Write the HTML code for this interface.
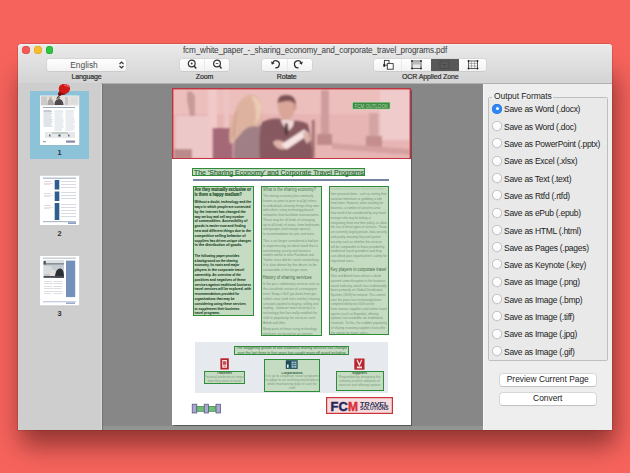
<!DOCTYPE html>
<html><head><meta charset="utf-8">
<style>
*{margin:0;padding:0;box-sizing:border-box}
html,body{width:630px;height:473px;overflow:hidden}
body{background:#F5635C;font-family:"Liberation Sans",sans-serif;position:relative}
div,svg{position:absolute}
#shadow{left:20px;top:74px;width:596px;height:372px;background:rgba(60,12,12,0.52);filter:blur(12px);border-radius:10px}
#win{left:18px;top:44px;width:594px;height:386px;background:#ECECEC;border-radius:4px 4px 0 0;overflow:hidden;box-shadow:0 0 0 0.5px rgba(90,20,20,0.35)}
#tb{left:18px;top:44px;width:594px;height:39px;background:linear-gradient(#EAEAEA,#D4D4D4);border-radius:4px 4px 0 0;box-shadow:inset 0 0.6px 0 #F8F8F8}
.light{width:7.8px;height:7.8px;border-radius:50%;top:46px}
.title{left:18px;width:594px;top:45.7px;text-align:center;font-size:8.2px;letter-spacing:-0.14px;color:#3A3A3A;white-space:nowrap}
.lbl{font-size:7px;font-weight:normal;-webkit-text-stroke:0.22px #333;letter-spacing:-0.12px;color:#333;text-align:center;white-space:nowrap;top:73px}
.seg{top:58.5px;height:12.5px;background:linear-gradient(#FEFEFE,#F3F3F3);border-radius:2.5px;box-shadow:0 0 0 0.5px #CACACA,0 0.6px 0.6px rgba(0,0,0,0.12)}
.radio{width:10px;height:10px;border-radius:50%;background:linear-gradient(#FFF,#F8F8F8);box-shadow:inset 0 0 0 0.8px #B8B8B8,0 0.4px 0.6px rgba(0,0,0,0.1)}
.rtxt{font-size:8.5px;letter-spacing:-0.27px;color:#1C1C1C;white-space:nowrap;left:504px}
.btn{height:11.5px;background:#FFF;border-radius:2.5px;box-shadow:0 0 0 0.5px #C4C4C4,0 0.6px 0.8px rgba(0,0,0,0.2);font-size:8.4px;color:#222;text-align:center;line-height:11.5px}
.gb{border:1px solid #2F8C3B;background:#C6DCC2}
.t{font-size:4.3px;line-height:4.8px;white-space:nowrap;overflow:hidden}
</style></head><body>
<div id="shadow"></div>
<div id="win"></div>
<div id="tb"></div>
<!-- traffic lights -->
<div class="light" style="left:22.3px;background:#F45B56;box-shadow:inset 0 0 0 0.5px #D94640"></div>
<div class="light" style="left:34px;background:#F7BD30;box-shadow:inset 0 0 0 0.5px #DA9E20"></div>
<div class="light" style="left:45.6px;background:#30C442;box-shadow:inset 0 0 0 0.5px #1FA02D"></div>
<div class="title">fcm_white_paper_-_sharing_economy_and_corporate_travel_programs.pdf</div>

<!-- language popup -->
<div class="seg" style="left:47px;width:79px;"></div>
<div style="left:48px;width:72px;top:60px;font-size:8.4px;color:#4E4E4E;text-align:center">English</div>
<svg style="left:118px;top:60px" width="7" height="10" viewBox="0 0 7 10"><path d="M1.5 4 L3.5 2 L5.5 4 M1.5 6 L3.5 8 L5.5 6" fill="none" stroke="#333" stroke-width="1.1"/></svg>
<div class="lbl" style="left:47px;width:79px">Language</div>

<!-- zoom -->
<div class="seg" style="left:179.6px;width:49.8px;"></div>
<div style="left:204px;top:59px;width:0.6px;height:11.5px;background:#EAEAEA"></div>
<svg style="left:184px;top:58.4px" width="40" height="14" viewBox="0 0 40 14">
 <circle cx="7.7" cy="5.5" r="3.4" fill="none" stroke="#333" stroke-width="1.2"/><line x1="10.2" y1="8" x2="12.2" y2="10.5" stroke="#333" stroke-width="1.4"/><circle cx="7.7" cy="5.5" r="0.9" fill="#333"/>
 <circle cx="33" cy="5.5" r="3.4" fill="none" stroke="#333" stroke-width="1.2"/><line x1="35.5" y1="8" x2="37.5" y2="10.5" stroke="#333" stroke-width="1.4"/><line x1="31.8" y1="5.5" x2="34.2" y2="5.5" stroke="#333" stroke-width="0.8"/>
</svg>
<div class="lbl" style="left:179.6px;width:49.8px">Zoom</div>

<!-- rotate -->
<div class="seg" style="left:261.7px;width:50px;"></div>
<div style="left:286.5px;top:59px;width:0.6px;height:11.5px;background:#EAEAEA"></div>
<svg style="left:0;top:0" width="630" height="473" viewBox="0 0 630 473">
 <path d="M272.51 63.10 A3.5 3.5 0 1 1 275.19 67.75" fill="none" stroke="#2A2A2A" stroke-width="1.25"/><path d="M271.94 64.68 L270.96 61.52 L274.72 62.88 Z" fill="#2A2A2A"/>
 <path d="M301.29 63.10 A3.5 3.5 0 1 0 298.61 67.75" fill="none" stroke="#2A2A2A" stroke-width="1.25"/><path d="M301.86 64.68 L302.84 61.52 L299.08 62.88 Z" fill="#2A2A2A"/>
</svg>
<div class="lbl" style="left:261.7px;width:50px">Rotate</div>

<!-- ocr zone -->
<div class="seg" style="left:374.2px;width:112.2px;"></div>
<div style="left:401px;top:59px;width:0.6px;height:11.5px;background:#EAEAEA"></div>
<div style="left:431px;top:58.5px;width:28px;height:12.5px;background:#585858"></div>
<svg style="left:372px;top:58px" width="116" height="14" viewBox="0 0 116 14">
 <rect x="12.4" y="2.4" width="4.6" height="4.8" fill="none" stroke="#333" stroke-width="0.9"/>
 <rect x="15.3" y="5.6" width="5.9" height="5.6" fill="#fff" stroke="#333" stroke-width="0.9"/>
 <rect x="11.3" y="5.8" width="1.8" height="3" fill="#222"/>
 <rect x="40" y="3" width="9" height="7.5" fill="#E8E8E8" stroke="#333" stroke-width="0.8"/>
 <rect x="40.5" y="3.5" width="8" height="3" fill="#bbb"/>
 <circle cx="40" cy="3" r="0.9" fill="#222"/><circle cx="49" cy="3" r="0.9" fill="#222"/><circle cx="40" cy="10.5" r="0.9" fill="#222"/><circle cx="49" cy="10.5" r="0.9" fill="#222"/>
 <rect x="68" y="3" width="9" height="7.5" fill="none" stroke="#4A4A4A" stroke-width="0.8"/>
 <rect x="71" y="6" width="3" height="1" fill="#444"/>
 <rect x="96.5" y="3" width="9" height="7.5" fill="none" stroke="#333" stroke-width="0.8"/>
 <path d="M99.5 3 V10.5 M102.5 3 V10.5 M96.5 5.5 H105.5 M96.5 8 H105.5" stroke="#777" stroke-width="0.5"/>
 <circle cx="96.5" cy="3" r="0.9" fill="#222"/><circle cx="105.5" cy="3" r="0.9" fill="#222"/><circle cx="96.5" cy="10.5" r="0.9" fill="#222"/><circle cx="105.5" cy="10.5" r="0.9" fill="#222"/>
</svg>
<div class="lbl" style="left:374.2px;width:112.2px">OCR Applied Zone</div>

<!-- toolbar bottom line -->
<div style="left:18px;top:83px;width:594px;height:1px;background:#B0B0B0"></div>

<!-- sidebar -->
<div style="left:18px;top:83px;width:83px;height:347px;background:#CECECE"></div>
<div style="left:101px;top:84px;width:1px;height:346px;background:#DCDCDC"></div>
<div style="left:30.3px;top:90.5px;width:58.7px;height:68.2px;background:#8CC3D9"></div>

<!-- SIDEBAR THUMBS -->
<svg style="left:0;top:0" width="630" height="473" viewBox="0 0 630 473" font-family="Liberation Sans">
<defs><filter id="b05"><feGaussianBlur stdDeviation="0.45"/></filter><filter id="shd" x="-20%" y="-20%" width="140%" height="140%"><feGaussianBlur stdDeviation="0.6"/></filter></defs>
<!-- thumb1 -->
<rect x="40" y="96" width="39.3" height="49.6" fill="#000" opacity="0.18" filter="url(#shd)"/>
<rect x="40" y="95.6" width="39.3" height="49.6" fill="#FFFFFF"/>
<g filter="url(#b05)">
<rect x="40.5" y="96" width="38.3" height="9.5" fill="#E4E0DE"/>
<rect x="41" y="96.5" width="6" height="8.5" fill="#CFCACA"/>
<path d="M47.5 105 C47.5 101 48.5 99 50.5 98.5 C52.5 99 53.5 101 54 105 Z" fill="#A8A2A0"/><circle cx="50.5" cy="98" r="1.4" fill="#C8B8A8"/>
<path d="M54.5 105 C54.5 101 56 99.5 59 99 C62 99.5 63 101 63.5 105 Z" fill="#4E4A50"/><circle cx="58.6" cy="97.6" r="1.5" fill="#8A7A72"/>
<rect x="65" y="97" width="3" height="8" fill="#C8C6C6"/>
<rect x="71" y="98" width="6" height="6" fill="#DDDCDC"/>
<rect x="43" y="107" width="32" height="0.9" fill="#8EA0B8"/>
<rect x="43.5" y="110.0" width="7.7" height="0.45" fill="#7A8AA0"/><rect x="43.5" y="111.0" width="8.4" height="0.45" fill="#7A8AA0"/><rect x="43.5" y="111.9" width="8.0" height="0.45" fill="#B8C2D0"/><rect x="43.5" y="112.9" width="8.6" height="0.45" fill="#B8C2D0"/><rect x="43.5" y="113.8" width="8.6" height="0.45" fill="#B8C2D0"/><rect x="43.5" y="114.8" width="7.3" height="0.45" fill="#B8C2D0"/><rect x="43.5" y="115.7" width="7.2" height="0.45" fill="#B8C2D0"/><rect x="43.5" y="116.7" width="9.1" height="0.45" fill="#B8C2D0"/><rect x="43.5" y="117.6" width="7.7" height="0.45" fill="#B8C2D0"/><rect x="43.5" y="118.6" width="7.7" height="0.45" fill="#B8C2D0"/><rect x="43.5" y="119.5" width="9.5" height="0.45" fill="#B8C2D0"/><rect x="43.5" y="120.5" width="8.2" height="0.45" fill="#B8C2D0"/><rect x="43.5" y="121.4" width="9.1" height="0.45" fill="#B8C2D0"/><rect x="43.5" y="122.4" width="8.3" height="0.45" fill="#B8C2D0"/><rect x="43.5" y="123.3" width="8.6" height="0.45" fill="#B8C2D0"/><rect x="43.5" y="124.3" width="7.5" height="0.45" fill="#B8C2D0"/><rect x="43.5" y="125.2" width="8.6" height="0.45" fill="#B8C2D0"/><rect x="43.5" y="126.2" width="9.2" height="0.45" fill="#B8C2D0"/>
<rect x="54.5" y="110.0" width="8.4" height="0.45" fill="#D0D6DE"/><rect x="54.5" y="111.0" width="8.9" height="0.45" fill="#D0D6DE"/><rect x="54.5" y="111.9" width="8.7" height="0.45" fill="#D0D6DE"/><rect x="54.5" y="112.9" width="7.3" height="0.45" fill="#D0D6DE"/><rect x="54.5" y="113.8" width="8.9" height="0.45" fill="#D0D6DE"/><rect x="54.5" y="114.8" width="8.5" height="0.45" fill="#D0D6DE"/><rect x="54.5" y="115.7" width="7.8" height="0.45" fill="#D0D6DE"/><rect x="54.5" y="116.7" width="7.2" height="0.45" fill="#D0D6DE"/><rect x="54.5" y="117.6" width="9.2" height="0.45" fill="#D0D6DE"/><rect x="54.5" y="118.6" width="8.2" height="0.45" fill="#D0D6DE"/><rect x="54.5" y="119.5" width="8.8" height="0.45" fill="#D0D6DE"/><rect x="54.5" y="120.5" width="9.2" height="0.45" fill="#D0D6DE"/><rect x="54.5" y="121.4" width="8.8" height="0.45" fill="#D0D6DE"/><rect x="54.5" y="122.4" width="9.3" height="0.45" fill="#D0D6DE"/><rect x="54.5" y="123.3" width="8.1" height="0.45" fill="#D0D6DE"/><rect x="54.5" y="124.3" width="9.0" height="0.45" fill="#D0D6DE"/><rect x="54.5" y="125.2" width="8.2" height="0.45" fill="#D0D6DE"/><rect x="54.5" y="126.2" width="9.3" height="0.45" fill="#D0D6DE"/><rect x="54.5" y="127.1" width="9.2" height="0.45" fill="#D0D6DE"/><rect x="54.5" y="128.1" width="7.4" height="0.45" fill="#D0D6DE"/><rect x="54.5" y="129.0" width="7.4" height="0.45" fill="#D0D6DE"/><rect x="54.5" y="130.0" width="7.6" height="0.45" fill="#D0D6DE"/>
<rect x="65.5" y="110.0" width="9.4" height="0.45" fill="#D0D6DE"/><rect x="65.5" y="111.0" width="8.2" height="0.45" fill="#D0D6DE"/><rect x="65.5" y="111.9" width="8.6" height="0.45" fill="#D0D6DE"/><rect x="65.5" y="112.9" width="7.8" height="0.45" fill="#D0D6DE"/><rect x="65.5" y="113.8" width="8.3" height="0.45" fill="#D0D6DE"/><rect x="65.5" y="114.8" width="8.0" height="0.45" fill="#D0D6DE"/><rect x="65.5" y="115.7" width="8.0" height="0.45" fill="#D0D6DE"/><rect x="65.5" y="116.7" width="8.5" height="0.45" fill="#D0D6DE"/><rect x="65.5" y="117.6" width="8.5" height="0.45" fill="#D0D6DE"/><rect x="65.5" y="118.6" width="9.3" height="0.45" fill="#D0D6DE"/><rect x="65.5" y="119.5" width="8.7" height="0.45" fill="#D0D6DE"/><rect x="65.5" y="120.5" width="9.3" height="0.45" fill="#D0D6DE"/><rect x="65.5" y="121.4" width="9.2" height="0.45" fill="#D0D6DE"/><rect x="65.5" y="122.4" width="9.5" height="0.45" fill="#D0D6DE"/><rect x="65.5" y="123.3" width="8.7" height="0.45" fill="#D0D6DE"/><rect x="65.5" y="124.3" width="7.5" height="0.45" fill="#D0D6DE"/><rect x="65.5" y="125.2" width="9.2" height="0.45" fill="#D0D6DE"/><rect x="65.5" y="126.2" width="9.4" height="0.45" fill="#D0D6DE"/><rect x="65.5" y="127.1" width="9.3" height="0.45" fill="#D0D6DE"/><rect x="65.5" y="128.1" width="8.5" height="0.45" fill="#D0D6DE"/><rect x="65.5" y="129.0" width="8.8" height="0.45" fill="#D0D6DE"/><rect x="65.5" y="130.0" width="7.6" height="0.45" fill="#D0D6DE"/>
<rect x="45" y="132" width="30" height="6" fill="#E6E8EA"/>
<rect x="52" y="132.5" width="16" height="1" fill="#A0B0A0"/>
<rect x="49" y="134.5" width="1.5" height="2" fill="#6A6A7A"/><rect x="58.5" y="134.5" width="2" height="2" fill="#3A4A5A"/><rect x="68" y="134.5" width="1.5" height="2" fill="#6A6A7A"/>
<rect x="66" y="140.5" width="9" height="2.2" fill="#8A8AA8"/>
<rect x="43" y="141" width="3" height="1.2" fill="#A0A0B8"/>
</g>
<!-- pin -->
<path d="M59 95.5 L56.5 99" stroke="#3A3A3A" stroke-width="0.8"/>
<ellipse cx="60.4" cy="93.6" rx="2.6" ry="2" fill="#7A0808" transform="rotate(-30 60.4 93.6)"/>
<path d="M58.8 89 C58.5 86 61 83.8 64.5 84 C68 84.2 70.6 86.2 70 89.2 C69.5 92 66.5 94.5 62.5 94.5 C60 94.5 59 92 58.8 89 Z" fill="#D01A1A"/>
<path d="M64 84.3 C67 84.2 69.8 85.8 69.8 88 C68 87 66 86.2 64 86 Z" fill="#F04A4A"/>
<path d="M60 91 C61 93.5 64 94.3 66.5 93.5 C64 95.6 60.5 95.6 59.5 92.5 Z" fill="#8A0C0C"/>
<text x="59.5" y="155" font-size="7.4" font-weight="bold" fill="#333" text-anchor="middle">1</text>
<!-- thumb2 -->
<rect x="40" y="176.3" width="39.3" height="49.6" fill="#000" opacity="0.18" filter="url(#shd)"/>
<rect x="40" y="175.8" width="39.3" height="49.6" fill="#FFFFFF"/>
<g filter="url(#b05)">
<rect x="43" y="177.8" width="33" height="0.6" fill="#4A6A92"/>
<rect x="54.7" y="180" width="4.6" height="9.5" fill="#2F5F8F"/>
<rect x="54.7" y="191.5" width="4.6" height="9.5" fill="#2F5F8F"/>
<rect x="54.7" y="203" width="4.6" height="17" fill="#2F5F8F"/>
<rect x="44" y="181" width="7" height="0.6" fill="#E0B8B8"/><rect x="44" y="183" width="9" height="0.5" fill="#C8C8D0"/><rect x="44" y="184.5" width="6" height="0.5" fill="#C8C8D0"/>
<rect x="44" y="193" width="7" height="0.6" fill="#E0B8B8"/><rect x="44" y="195" width="9" height="0.5" fill="#C8C8D0"/><rect x="44" y="196.5" width="6" height="0.5" fill="#C8C8D0"/>
<rect x="44" y="205" width="7" height="0.6" fill="#E0B8B8"/><rect x="44" y="207" width="9" height="0.5" fill="#C8C8D0"/><rect x="44" y="208.5" width="6" height="0.5" fill="#C8C8D0"/>

<rect x="61" y="181" width="15" height="0.6" fill="#BCC2CC"/><rect x="61" y="184" width="15" height="0.6" fill="#BCC2CC"/><rect x="61" y="187" width="15" height="0.6" fill="#BCC2CC"/>
<rect x="61" y="192" width="15" height="0.6" fill="#BCC2CC"/><rect x="61" y="195" width="15" height="0.6" fill="#BCC2CC"/><rect x="61" y="198" width="15" height="0.6" fill="#BCC2CC"/>
<rect x="61" y="204" width="15" height="0.6" fill="#BCC2CC"/><rect x="61" y="207" width="15" height="0.6" fill="#BCC2CC"/><rect x="61" y="210" width="15" height="0.6" fill="#BCC2CC"/><rect x="61" y="213" width="15" height="0.6" fill="#BCC2CC"/><rect x="61" y="216" width="15" height="0.6" fill="#BCC2CC"/>
<rect x="43" y="221.5" width="33" height="0.6" fill="#5A7AA0"/>
<rect x="68" y="222.5" width="8" height="1.2" fill="#5A7AA0"/>
</g>
<text x="59.6" y="236" font-size="7.4" font-weight="bold" fill="#333" text-anchor="middle">2</text>
<!-- thumb3 -->
<rect x="40" y="256.5" width="39.3" height="49.6" fill="#000" opacity="0.18" filter="url(#shd)"/>
<rect x="40" y="256" width="39.3" height="49.6" fill="#FFFFFF"/>
<g filter="url(#b05)">
<rect x="43" y="257.8" width="33" height="0.6" fill="#7A8898"/>
<rect x="43.6" y="260.3" width="20.3" height="17.5" fill="#C4CACE"/>
<rect x="43.6" y="260.3" width="20.3" height="3" fill="#DDE2E6"/>
<rect x="43.6" y="263" width="20.3" height="1.6" fill="#8A9298"/>
<rect x="43.6" y="261" width="2.2" height="3.5" fill="#505458"/>
<rect x="43.6" y="266" width="8" height="8" fill="#D8DCDE"/>
<path d="M55 277.8 C55 272 57 268.5 60 268.5 C63 268.5 64 272 64 277.8 Z" fill="#2A2E34"/>
<path d="M49 277 L52 269 L56 271 L54 277 Z" fill="#E4E0DC"/>
<rect x="43.6" y="276" width="20.3" height="1.8" fill="#4A4E52"/>
<rect x="66" y="260.6" width="9.2" height="36.5" fill="#7590BB"/>
<rect x="44" y="281" width="8" height="0.5" fill="#BBBBC2"/><rect x="53.5" y="281" width="9" height="0.5" fill="#BBBBC2"/>
<rect x="44" y="283.5" width="9" height="0.5" fill="#BBBBC2"/><rect x="53.5" y="283.5" width="9" height="0.5" fill="#BBBBC2"/>
<rect x="44" y="286" width="8" height="0.5" fill="#BBBBC2"/><rect x="53.5" y="286" width="9" height="0.5" fill="#BBBBC2"/>
<rect x="44" y="288.5" width="9" height="0.5" fill="#BBBBC2"/><rect x="53.5" y="288.5" width="8" height="0.5" fill="#BBBBC2"/>
<rect x="44" y="291" width="9" height="0.5" fill="#BBBBC2"/><rect x="53.5" y="291" width="9" height="0.5" fill="#BBBBC2"/>
<rect x="44" y="293.5" width="7" height="0.5" fill="#BBBBC2"/><rect x="53.5" y="293.5" width="9" height="0.5" fill="#BBBBC2"/>
<rect x="43" y="301.5" width="33" height="0.7" fill="#8FA4C4"/>
<rect x="66" y="302.5" width="9" height="1.4" fill="#8FA4C4"/>
</g>
<text x="59.6" y="316" font-size="7.4" font-weight="bold" fill="#333" text-anchor="middle">3</text>
</svg>

<!-- main area -->
<div style="left:102px;top:84px;width:381px;height:346px;background:#878787"></div><div style="left:102px;top:426.3px;width:381px;height:3.7px;background:#939595"></div>
<div style="left:102px;top:84px;width:1px;height:346px;background:#727272"></div>

<!-- right panel -->
<div style="left:483px;top:84px;width:129px;height:346px;background:#EEEEEE;border-left:1px solid #F7F7F7"></div>

<!-- RIGHT PANEL CONTENT -->
<div style="left:488px;top:97px;width:120px;height:264px;border:1px solid #BEBEBE;border-radius:1.5px;background:#E9E9E9"></div>
<div style="left:492px;top:90px;width:61px;height:10px;background:#EEEEEE"></div>
<div style="left:494px;top:91px;font-size:8.5px;letter-spacing:-0.1px;color:#262626;white-space:nowrap">Output Formats</div>
<div class="radio" style="left:492.3px;top:103.7px;background:#2F86F6;box-shadow:inset 0 0 0 0.5px #1C6FDC"></div><div style="left:495.5px;top:106.9px;width:3.6px;height:3.6px;border-radius:50%;background:#fff"></div>
<div class="rtxt" style="top:104.4px">Save as Word (.docx)</div>
<div class="radio" style="left:492.3px;top:121.0px"></div>
<div class="rtxt" style="top:121.7px">Save as Word (.doc)</div>
<div class="radio" style="left:492.3px;top:138.3px"></div>
<div class="rtxt" style="top:139.0px">Save as PowerPoint (.pptx)</div>
<div class="radio" style="left:492.3px;top:155.6px"></div>
<div class="rtxt" style="top:156.3px">Save as Excel (.xlsx)</div>
<div class="radio" style="left:492.3px;top:172.9px"></div>
<div class="rtxt" style="top:173.6px">Save as Text (.text)</div>
<div class="radio" style="left:492.3px;top:190.2px"></div>
<div class="rtxt" style="top:190.9px">Save as Rtfd (.rtfd)</div>
<div class="radio" style="left:492.3px;top:207.5px"></div>
<div class="rtxt" style="top:208.2px">Save as ePub (.epub)</div>
<div class="radio" style="left:492.3px;top:224.8px"></div>
<div class="rtxt" style="top:225.5px">Save as HTML (.html)</div>
<div class="radio" style="left:492.3px;top:242.1px"></div>
<div class="rtxt" style="top:242.8px">Save as Pages (.pages)</div>
<div class="radio" style="left:492.3px;top:259.4px"></div>
<div class="rtxt" style="top:260.1px">Save as Keynote (.key)</div>
<div class="radio" style="left:492.3px;top:276.7px"></div>
<div class="rtxt" style="top:277.4px">Save as Image (.png)</div>
<div class="radio" style="left:492.3px;top:294.0px"></div>
<div class="rtxt" style="top:294.7px">Save as Image (.bmp)</div>
<div class="radio" style="left:492.3px;top:311.3px"></div>
<div class="rtxt" style="top:312.0px">Save as Image (.tiff)</div>
<div class="radio" style="left:492.3px;top:328.6px"></div>
<div class="rtxt" style="top:329.3px">Save as Image (.jpg)</div>
<div class="radio" style="left:492.3px;top:345.9px"></div>
<div class="rtxt" style="top:346.6px">Save as Image (.gif)</div>
<div class="btn" style="left:500px;top:374.2px;width:95.5px">Preview Current Page</div>
<div class="btn" style="left:500px;top:393px;width:95.5px">Convert</div>

<!-- PAGE -->
<div id="page" style="left:172px;top:88px;width:239px;height:337px;background:#FFFFFF;box-shadow:0.5px 0.5px 1px rgba(0,0,0,0.35)"></div>
<!-- PAGEBLOCK -->
<svg style="left:172px;top:88px" width="239" height="71" viewBox="172 88 239 71">
<defs><filter id="bl" x="-10%" y="-10%" width="120%" height="120%"><feGaussianBlur stdDeviation="0.8"/></filter></defs>
<rect x="172" y="88" width="239" height="72" fill="#E8B5B5"/>
<g filter="url(#bl)">
<rect x="172" y="88" width="239" height="26" fill="#ECBFBD"/>
<rect x="208" y="88" width="9" height="72" fill="#F0C9C8"/>
<rect x="224" y="88" width="5" height="72" fill="#EDC4C3"/>
<path d="M187 92 L191 91 L195 96 L195 116 L190 116 L187 100 Z" fill="#C99898"/>
<rect x="176" y="116" width="32" height="42" fill="#EDC8C8"/>
<rect x="174" y="149" width="18" height="10" fill="#BC8A8A"/>
<rect x="212.6" y="128" width="20" height="32" fill="#A46777"/>
<!-- woman jacket -->
<path d="M234 160 C233 150 234 138 238 130 C245 125 256 123 263 126 C268 136 271 148 272 160 Z" fill="#A07F86"/>
<!-- woman hair -->
<path d="M230 144 C228 133 231 119 236 108 C240 99 246 94.5 252 94.5 C258 95 261 100 262 108 C263 116 261 122 258 127 C253 125 247 127 243 131 C239 136 235 141 230 144 Z" fill="#DDB39F"/>
<path d="M251 96 C257 96 261 101 262 108 C261 115 259 121 255 125 C257 115 256 104 251 96 Z" fill="#EBCAB4"/>
<path d="M236 112 C234 120 233 130 232 138 L235 136 C235 128 236 118 238 110 Z" fill="#CFA08E"/>
<!-- man suit -->
<path d="M260 160 C259 146 259 131 262 122 C270 118 277 118 282 119 L294 120.5 C300 121 305 122 308 124 C311 136 312 148 313 160 Z" fill="#87585E"/>
<!-- man face -->
<path d="M277.5 104 C277 97 281.5 95 286.5 95.5 C292 96 295.5 100 295 107 C294.5 113 292.5 119 286.5 120 C281 120 278 113 277.5 104 Z" fill="#D9A699"/>
<path d="M277.8 103 C277 97 281 94.6 287 94.8 C293 95 296.5 98.5 296 106 C294 102 291 101 288 101 C284 101 280 102 277.8 103 Z" fill="#7E5252"/>
<rect x="293.5" y="104" width="2.8" height="6" rx="1.2" fill="#CC9488"/>
<!-- collar + tie -->
<path d="M280.5 119.5 L294 120.5 L293 126 L288 132 L283 125 Z" fill="#F3DAD8"/>
<path d="M285 123 L287.8 123 L288.8 133 L286.4 136 L284.4 133 Z" fill="#563A40"/>
<!-- hands -->
<path d="M273 142 C276 139 282 140 285 143 L285 149 C280 150 275 148 273 142 Z" fill="#E0B2AA"/>
<!-- tablet -->
<path d="M281 144.5 L304 129.5 L309.5 134 L286.5 149.5 Z" fill="#F7E4E2"/>
<path d="M303 132 C306 131 310 134 310.5 140 L307 144 C305 141 303 137 303 132 Z" fill="#E0B2AA"/>
<!-- right scene -->
<rect x="312" y="120" width="2.5" height="38" fill="#9C6A6C"/>
<rect x="380" y="90" width="30" height="50" fill="#EFCBCB"/>
<rect x="321" y="90" width="8" height="44" fill="#CE9C9C"/>
<rect x="317" y="134" width="15" height="11" fill="#C08A8A"/>
<rect x="369" y="113" width="9" height="23" fill="#D3A4A4"/>
<rect x="366" y="136" width="16" height="11" fill="#C48E8E"/>
<path d="M332 143 L410 149 L410 155 L332 149 Z" fill="#D6A0A0"/>
</g>
<rect x="172.7" y="88.7" width="237.6" height="70" fill="none" stroke="#BF3440" stroke-width="1.4"/>
<rect x="352.3" y="102.1" width="37.8" height="7" fill="#3A8A3E" stroke="#CFE6C8" stroke-width="0.6"/>
<text x="354.5" y="107.5" font-family="Liberation Sans" font-size="4.8" fill="#B4D2B2" textLength="33.5" lengthAdjust="spacingAndGlyphs">FCM OUTLOOK</text>
</svg>
<div style="left:192.3px;top:168.3px;width:172.7px;height:8px;border:1px solid #2F8C3B;background:#C6DCC2"></div>
<div style="left:193.3px;top:179.4px;width:196px;height:1.2px;background:#7585A3"></div>
<div style="left:193px;top:186px;width:61.4px;height:129.6px;border:1px solid #2F8C3B;background:#C6DCC2"></div>
<div style="left:261px;top:186px;width:61px;height:149.6px;border:1px solid #2F8C3B;background:#C6DCC2"></div>
<div style="left:328.6px;top:186.2px;width:60.4px;height:149.2px;border:1px solid #2F8C3B;background:#C6DCC2"></div>
<svg style="left:0;top:0" width="630" height="473" viewBox="0 0 630 473" font-family="Liberation Sans"><text x="194" y="174.9" font-size="7.3" fill="#2A6633" stroke="#2A6633" stroke-width="0.15" textLength="170" lengthAdjust="spacingAndGlyphs">The &#8216;Sharing Economy&#8217; and Corporate Travel Programs</text>
<text x="194.5" y="190.60" font-size="4.80" font-weight="bold" fill="#1E5027" stroke="#1E5027" stroke-width="0.18" textLength="56.5" lengthAdjust="spacingAndGlyphs">Are they mutually exclusive or</text>
<text x="194.5" y="195.60" font-size="4.80" font-weight="bold" fill="#1E5027" stroke="#1E5027" stroke-width="0.18" textLength="47.3" lengthAdjust="spacingAndGlyphs">is there a happy medium?</text>
<text x="194.5" y="203.20" font-size="4.40" font-weight="bold" fill="#22462A" stroke="#22462A" stroke-width="0.08" textLength="56.5" lengthAdjust="spacingAndGlyphs">Without a doubt, technology and the</text>
<text x="194.5" y="208.00" font-size="4.40" font-weight="bold" fill="#22462A" stroke="#22462A" stroke-width="0.08" textLength="56.1" lengthAdjust="spacingAndGlyphs">ways in which people are connected</text>
<text x="194.5" y="212.80" font-size="4.40" font-weight="bold" fill="#22462A" stroke="#22462A" stroke-width="0.08" textLength="51.1" lengthAdjust="spacingAndGlyphs">by the internet has changed the</text>
<text x="194.5" y="217.60" font-size="4.40" font-weight="bold" fill="#22462A" stroke="#22462A" stroke-width="0.08" textLength="49.5" lengthAdjust="spacingAndGlyphs">way we buy and sell any number</text>
<text x="194.5" y="222.40" font-size="4.40" font-weight="bold" fill="#22462A" stroke="#22462A" stroke-width="0.08" textLength="52.8" lengthAdjust="spacingAndGlyphs">of commodities. Accessibility of</text>
<text x="194.5" y="227.20" font-size="4.40" font-weight="bold" fill="#22462A" stroke="#22462A" stroke-width="0.08" textLength="51.1" lengthAdjust="spacingAndGlyphs">goods is easier now and finding</text>
<text x="194.5" y="232.00" font-size="4.40" font-weight="bold" fill="#22462A" stroke="#22462A" stroke-width="0.08" textLength="56.5" lengthAdjust="spacingAndGlyphs">new and different things due to the</text>
<text x="194.5" y="236.80" font-size="4.40" font-weight="bold" fill="#22462A" stroke="#22462A" stroke-width="0.08" textLength="51.1" lengthAdjust="spacingAndGlyphs">competitive selling behavior of</text>
<text x="194.5" y="241.60" font-size="4.40" font-weight="bold" fill="#22462A" stroke="#22462A" stroke-width="0.08" textLength="56.5" lengthAdjust="spacingAndGlyphs">suppliers has driven unique changes</text>
<text x="194.5" y="246.40" font-size="4.40" font-weight="bold" fill="#22462A" stroke="#22462A" stroke-width="0.08" textLength="47.8" lengthAdjust="spacingAndGlyphs">in the distribution of goods.</text>
<text x="194.5" y="256.80" font-size="4.40" font-weight="bold" fill="#22462A" stroke="#22462A" stroke-width="0.08" textLength="44.8" lengthAdjust="spacingAndGlyphs">The following paper provides</text>
<text x="194.5" y="261.60" font-size="4.40" font-weight="bold" fill="#22462A" stroke="#22462A" stroke-width="0.08" textLength="43.2" lengthAdjust="spacingAndGlyphs">a background on the sharing</text>
<text x="194.5" y="266.40" font-size="4.40" font-weight="bold" fill="#22462A" stroke="#22462A" stroke-width="0.08" textLength="44.8" lengthAdjust="spacingAndGlyphs">economy, its roots and major</text>
<text x="194.5" y="271.20" font-size="4.40" font-weight="bold" fill="#22462A" stroke="#22462A" stroke-width="0.08" textLength="49.6" lengthAdjust="spacingAndGlyphs">players in the corporate travel</text>
<text x="194.5" y="276.00" font-size="4.40" font-weight="bold" fill="#22462A" stroke="#22462A" stroke-width="0.08" textLength="46.4" lengthAdjust="spacingAndGlyphs">ownership. An overview of the</text>
<text x="194.5" y="280.80" font-size="4.40" font-weight="bold" fill="#22462A" stroke="#22462A" stroke-width="0.08" textLength="51.2" lengthAdjust="spacingAndGlyphs">positives and negatives of these</text>
<text x="194.5" y="285.60" font-size="4.40" font-weight="bold" fill="#22462A" stroke="#22462A" stroke-width="0.08" textLength="56.5" lengthAdjust="spacingAndGlyphs">services against traditional business</text>
<text x="194.5" y="290.40" font-size="4.40" font-weight="bold" fill="#22462A" stroke="#22462A" stroke-width="0.08" textLength="56.5" lengthAdjust="spacingAndGlyphs">travel services will be explored, with</text>
<text x="194.5" y="295.20" font-size="4.40" font-weight="bold" fill="#22462A" stroke="#22462A" stroke-width="0.08" textLength="44.8" lengthAdjust="spacingAndGlyphs">recommendations provided for</text>
<text x="194.5" y="300.00" font-size="4.40" font-weight="bold" fill="#22462A" stroke="#22462A" stroke-width="0.08" textLength="40.0" lengthAdjust="spacingAndGlyphs">organisations that may be</text>
<text x="194.5" y="304.80" font-size="4.40" font-weight="bold" fill="#22462A" stroke="#22462A" stroke-width="0.08" textLength="51.2" lengthAdjust="spacingAndGlyphs">considering using these services</text>
<text x="194.5" y="309.60" font-size="4.40" font-weight="bold" fill="#22462A" stroke="#22462A" stroke-width="0.08" textLength="44.8" lengthAdjust="spacingAndGlyphs">to supplement their business</text>
<text x="194.5" y="314.40" font-size="4.40" font-weight="bold" fill="#22462A" stroke="#22462A" stroke-width="0.08" textLength="25.6" lengthAdjust="spacingAndGlyphs">travel programs.</text>
<text x="263.0" y="190.70" font-size="4.60" font-weight="normal" fill="#4E7A53"  textLength="52.9" lengthAdjust="spacingAndGlyphs">What is the sharing economy?</text>
<text x="263.0" y="197.10" font-size="4.30" font-weight="normal" fill="#74947A"  textLength="50.3" lengthAdjust="spacingAndGlyphs">The sharing economy (also commonly</text>
<text x="263.0" y="201.86" font-size="4.30" font-weight="normal" fill="#74947A"  textLength="53.3" lengthAdjust="spacingAndGlyphs">known as peer to peer or p2p) refers</text>
<text x="263.0" y="206.62" font-size="4.30" font-weight="normal" fill="#74947A"  textLength="56.2" lengthAdjust="spacingAndGlyphs">to individuals sharing things they own</text>
<text x="263.0" y="211.38" font-size="4.30" font-weight="normal" fill="#74947A"  textLength="50.3" lengthAdjust="spacingAndGlyphs">with others using technology-based</text>
<text x="263.0" y="216.14" font-size="4.30" font-weight="normal" fill="#74947A"  textLength="56.2" lengthAdjust="spacingAndGlyphs">networks that facilitate transactions.</text>
<text x="263.0" y="220.90" font-size="4.30" font-weight="normal" fill="#74947A"  textLength="51.8" lengthAdjust="spacingAndGlyphs">These may be all kinds of arranging</text>
<text x="263.0" y="225.66" font-size="4.30" font-weight="normal" fill="#74947A"  textLength="56.5" lengthAdjust="spacingAndGlyphs">up to all kinds of areas, from bedrooms</text>
<text x="263.0" y="230.42" font-size="4.30" font-weight="normal" fill="#74947A"  textLength="47.4" lengthAdjust="spacingAndGlyphs">and garages (and storage spaces)</text>
<text x="263.0" y="235.18" font-size="4.30" font-weight="normal" fill="#74947A"  textLength="51.8" lengthAdjust="spacingAndGlyphs">to accommodation for pets and more.</text>
<text x="263.0" y="242.00" font-size="4.30" font-weight="normal" fill="#74947A"  textLength="55.1" lengthAdjust="spacingAndGlyphs">This is no longer considered a fad but</text>
<text x="263.0" y="246.75" font-size="4.30" font-weight="normal" fill="#74947A"  textLength="55.1" lengthAdjust="spacingAndGlyphs">is experiencing an ideal trend that is</text>
<text x="263.0" y="251.50" font-size="4.30" font-weight="normal" fill="#74947A"  textLength="47.9" lengthAdjust="spacingAndGlyphs">transforming society and business</text>
<text x="263.0" y="256.25" font-size="4.30" font-weight="normal" fill="#74947A"  textLength="50.8" lengthAdjust="spacingAndGlyphs">models similar to what Facebook and</text>
<text x="263.0" y="261.00" font-size="4.30" font-weight="normal" fill="#74947A"  textLength="56.5" lengthAdjust="spacingAndGlyphs">Twitter once did for social networking.</text>
<text x="263.0" y="265.75" font-size="4.30" font-weight="normal" fill="#74947A"  textLength="53.6" lengthAdjust="spacingAndGlyphs">It is also driven by the desire to be</text>
<text x="263.0" y="270.50" font-size="4.30" font-weight="normal" fill="#74947A"  textLength="44.9" lengthAdjust="spacingAndGlyphs">sustainable in the longer term.</text>
<text x="262.5" y="278.70" font-size="5.30" font-weight="normal" fill="#3F6C46"  textLength="49.1" lengthAdjust="spacingAndGlyphs">History of sharing services</text>
<text x="263.0" y="285.40" font-size="4.30" font-weight="normal" fill="#74947A"  textLength="56.5" lengthAdjust="spacingAndGlyphs">In the past, rudimentary services such as</text>
<text x="263.0" y="290.20" font-size="4.30" font-weight="normal" fill="#74947A"  textLength="54.0" lengthAdjust="spacingAndGlyphs">the classifieds section of a newspaper</text>
<text x="263.0" y="295.00" font-size="4.30" font-weight="normal" fill="#74947A"  textLength="54.0" lengthAdjust="spacingAndGlyphs">even 'Swap n Sell' got deals from gar-</text>
<text x="263.0" y="299.80" font-size="4.30" font-weight="normal" fill="#74947A"  textLength="56.5" lengthAdjust="spacingAndGlyphs">sellers near (and sites similar) sharing</text>
<text x="263.0" y="304.60" font-size="4.30" font-weight="normal" fill="#74947A"  textLength="55.4" lengthAdjust="spacingAndGlyphs">concepts applied to buying, selling and</text>
<text x="263.0" y="309.40" font-size="4.30" font-weight="normal" fill="#74947A"  textLength="52.5" lengthAdjust="spacingAndGlyphs">trading - however most recently it is</text>
<text x="263.0" y="314.20" font-size="4.30" font-weight="normal" fill="#74947A"  textLength="54.0" lengthAdjust="spacingAndGlyphs">technology that has really enabled the</text>
<text x="263.0" y="319.00" font-size="4.30" font-weight="normal" fill="#74947A"  textLength="52.5" lengthAdjust="spacingAndGlyphs">shift in popularity for services such</text>
<text x="263.0" y="323.80" font-size="4.30" font-weight="normal" fill="#74947A"  textLength="22.7" lengthAdjust="spacingAndGlyphs">Airbnb and Uber.</text>
<text x="263.0" y="330.10" font-size="4.30" font-weight="normal" fill="#74947A"  textLength="53.6" lengthAdjust="spacingAndGlyphs">Many parts of these rising technology</text>
<text x="263.0" y="334.60" font-size="4.30" font-weight="normal" fill="#74947A"  textLength="49.3" lengthAdjust="spacingAndGlyphs">platforms are based on an internet</text>
<text x="330.8" y="190.20" font-size="4.30" font-weight="normal" fill="#A8C0A8"  textLength="53.6" lengthAdjust="spacingAndGlyphs">traditional business travel providers</text>
<text x="330.8" y="194.80" font-size="4.30" font-weight="normal" fill="#74947A"  textLength="56.0" lengthAdjust="spacingAndGlyphs">their personal items - such as renting their</text>
<text x="330.8" y="199.60" font-size="4.30" font-weight="normal" fill="#74947A"  textLength="51.1" lengthAdjust="spacingAndGlyphs">vacation timeshare or grabbing a ride</text>
<text x="330.8" y="204.40" font-size="4.30" font-weight="normal" fill="#74947A"  textLength="52.4" lengthAdjust="spacingAndGlyphs">from home. However, when traveling for</text>
<text x="330.8" y="209.20" font-size="4.30" font-weight="normal" fill="#74947A"  textLength="49.7" lengthAdjust="spacingAndGlyphs">business, a number of concerns arise</text>
<text x="330.8" y="214.00" font-size="4.30" font-weight="normal" fill="#74947A"  textLength="55.2" lengthAdjust="spacingAndGlyphs">that need to be considered by any travel</text>
<text x="330.8" y="218.80" font-size="4.30" font-weight="normal" fill="#74947A"  textLength="40.0" lengthAdjust="spacingAndGlyphs">manager who may be looking at</text>
<text x="330.8" y="223.60" font-size="4.30" font-weight="normal" fill="#74947A"  textLength="56.0" lengthAdjust="spacingAndGlyphs">integrating them into their policy, or allow</text>
<text x="330.8" y="228.40" font-size="4.30" font-weight="normal" fill="#74947A"  textLength="56.0" lengthAdjust="spacingAndGlyphs">the use of these types of services. These</text>
<text x="330.8" y="233.20" font-size="4.30" font-weight="normal" fill="#74947A"  textLength="56.0" lengthAdjust="spacingAndGlyphs">are currently largely private, data security</text>
<text x="330.8" y="238.00" font-size="4.30" font-weight="normal" fill="#74947A"  textLength="49.7" lengthAdjust="spacingAndGlyphs">and quality, meaning they and system</text>
<text x="330.8" y="242.80" font-size="4.30" font-weight="normal" fill="#74947A"  textLength="51.1" lengthAdjust="spacingAndGlyphs">security such as whether the services</text>
<text x="330.8" y="247.60" font-size="4.30" font-weight="normal" fill="#74947A"  textLength="53.8" lengthAdjust="spacingAndGlyphs">will be comparable to those provided by</text>
<text x="330.8" y="252.40" font-size="4.30" font-weight="normal" fill="#74947A"  textLength="51.1" lengthAdjust="spacingAndGlyphs">traditional travel providers and they</text>
<text x="330.8" y="257.20" font-size="4.30" font-weight="normal" fill="#74947A"  textLength="56.0" lengthAdjust="spacingAndGlyphs">can afford your organisation's safety for</text>
<text x="330.8" y="262.00" font-size="4.30" font-weight="normal" fill="#74947A"  textLength="23.5" lengthAdjust="spacingAndGlyphs">registered users.</text>
<text x="330.5" y="270.50" font-size="5.00" font-weight="normal" fill="#3F6C46"  textLength="55.8" lengthAdjust="spacingAndGlyphs">Key players in corporate travel</text>
<text x="330.8" y="277.10" font-size="4.30" font-weight="normal" fill="#74947A"  textLength="50.4" lengthAdjust="spacingAndGlyphs">Uber and Airbnb have without a doubt</text>
<text x="330.8" y="281.80" font-size="4.30" font-weight="normal" fill="#74947A"  textLength="54.6" lengthAdjust="spacingAndGlyphs">spurred some disruption in the business</text>
<text x="330.8" y="286.50" font-size="4.30" font-weight="normal" fill="#74947A"  textLength="56.0" lengthAdjust="spacingAndGlyphs">travel industry, which has traditionally</text>
<text x="330.8" y="291.20" font-size="4.30" font-weight="normal" fill="#74947A"  textLength="51.8" lengthAdjust="spacingAndGlyphs">been primarily on Global Distribution</text>
<text x="330.8" y="295.90" font-size="4.30" font-weight="normal" fill="#74947A"  textLength="54.6" lengthAdjust="spacingAndGlyphs">Systems (GDS) for network. This content</text>
<text x="330.8" y="300.60" font-size="4.30" font-weight="normal" fill="#74947A"  textLength="50.4" lengthAdjust="spacingAndGlyphs">over the years has increasingly been</text>
<text x="330.8" y="305.30" font-size="4.30" font-weight="normal" fill="#74947A"  textLength="43.4" lengthAdjust="spacingAndGlyphs">complemented by non-GDS content</text>
<text x="330.8" y="310.00" font-size="4.30" font-weight="normal" fill="#74947A"  textLength="56.0" lengthAdjust="spacingAndGlyphs">from various suppliers and online travel</text>
<text x="330.8" y="314.70" font-size="4.30" font-weight="normal" fill="#74947A"  textLength="47.6" lengthAdjust="spacingAndGlyphs">agents (such as Expedia), offering</text>
<text x="330.8" y="319.40" font-size="4.30" font-weight="normal" fill="#74947A"  textLength="51.8" lengthAdjust="spacingAndGlyphs">options not available via traditional</text>
<text x="330.8" y="324.10" font-size="4.30" font-weight="normal" fill="#74947A"  textLength="56.0" lengthAdjust="spacingAndGlyphs">channels. To this, the sudden popularity</text>
<text x="330.8" y="328.80" font-size="4.30" font-weight="normal" fill="#74947A"  textLength="54.6" lengthAdjust="spacingAndGlyphs">of sharing economy suppliers have offer</text>
<text x="330.8" y="333.50" font-size="4.30" font-weight="normal" fill="#74947A"  textLength="39.2" lengthAdjust="spacingAndGlyphs">the option for many users...</text></svg>
<div style="left:195px;top:342px;width:193.3px;height:51.3px;background:#E6E9ED"></div>
<div style="left:233.6px;top:345.8px;width:115px;height:9.7px;border:1px solid #2F8C3B;background:#C6DCC2"></div>
<div class="t" style="left:236px;top:346.4px;width:111px;text-align:center;color:#2F6A37;font-size:3.6px;line-height:4.2px">The staggering growth of non-traditional sharing services has changed<br>over the last three to five years has caught many off guard including</div>
<div style="left:203.5px;top:370.9px;width:41.6px;height:13px;border:1px solid #2F8C3B;background:#C6DCC2"></div>
<div class="t" style="left:204px;top:372.3px;width:41px;text-align:center;color:#2F5A35;font-size:3.3px;line-height:3.9px"><b>Travellers</b><br><span style="color:#7C9B7E">Personal preferences impact</span><br><span style="color:#7C9B7E">how they want to travel</span></div>
<div style="left:264px;top:359.1px;width:55.8px;height:32.5px;border:1px solid #2F8C3B;background:#C6DCC2"></div>
<div class="t" style="left:264.5px;top:371.6px;width:55px;text-align:center;color:#2F5A35;font-size:3.4px;line-height:3.8px"><b>Corporations</b><br><span style="color:#7C9B7E">It is up to corporate travel programs</span><br><span style="color:#7C9B7E">to adapt to an evolving marketplace</span><br><span style="color:#7C9B7E">while maintaining duty of care for</span><br><span style="color:#7C9B7E">staff</span></div>
<div style="left:335.5px;top:371.1px;width:48px;height:20.4px;border:1px solid #2F8C3B;background:#C6DCC2"></div>
<div class="t" style="left:336px;top:372.3px;width:47px;text-align:center;color:#2F5A35;font-size:3.3px;line-height:3.9px"><b>Suppliers</b><br><span style="color:#7C9B7E">Responded by disrupting the</span><br><span style="color:#7C9B7E">industry to drive adoption of</span><br><span style="color:#7C9B7E">services and offering options</span></div>
<svg style="left:0;top:0" width="630" height="473" viewBox="0 0 630 473">
<rect x="220.4" y="358.3" width="8.4" height="11.2" fill="#B8242E"/>
<rect x="222.2" y="360" width="4.8" height="7.8" fill="#F4DDE0"/>
<rect x="223" y="361.2" width="3.2" height="3.6" fill="#C0505A"/>
<rect x="223.6" y="365.8" width="2" height="0.9" fill="#C0505A"/>
<rect x="285.8" y="360.2" width="11.9" height="8.7" fill="#1D4D5A"/>
<rect x="291.5" y="361.5" width="5" height="6.3" fill="#9EC0CC"/>
<path d="M291.5 363.5 H296.5 M291.5 365.5 H296.5 M294 361.5 V367.8" stroke="#1D4D5A" stroke-width="0.5"/>
<rect x="287" y="364.5" width="1.6" height="3.3" fill="#E8F0F2"/>
<rect x="354.3" y="358.5" width="10.2" height="11.2" fill="#B8242E"/>
<path d="M356.5 360 L358.3 364.5 L359.4 366.5 L360.5 364.5 L362.3 360 L361.2 359.6 L359.4 363.4 L357.6 359.6 Z" fill="#F4DDE0"/>
<rect x="356.8" y="366.5" width="5.2" height="1.8" fill="#F4DDE0"/>
</svg>
<svg style="left:191px;top:403px" width="31" height="11" viewBox="0 0 31 11">
<rect x="5.5" y="3.3" width="20" height="5" fill="#6CBF74" stroke="#2F7A3A" stroke-width="0.6"/>
<rect x="1.2" y="1.2" width="4.6" height="8.8" fill="#A8A8D2" stroke="#4E4E70" stroke-width="0.7"/>
<rect x="13.2" y="1.2" width="4.3" height="8.8" fill="#A8A8D2" stroke="#4E4E70" stroke-width="0.7"/>
<rect x="25" y="1.2" width="4.6" height="8.8" fill="#A8A8D2" stroke="#4E4E70" stroke-width="0.7"/>
</svg>
<svg style="left:326px;top:397px" width="67" height="17" viewBox="0 0 67 17">
<rect x="0.6" y="0.6" width="65.8" height="15.8" fill="#F4DCDF" stroke="#CC323A" stroke-width="1.2"/>
<text x="4.6" y="13.6" font-family="Liberation Sans" font-weight="bold" font-size="13" fill="#22285A" stroke="#22285A" stroke-width="0.5" textLength="17" lengthAdjust="spacingAndGlyphs">FC</text>
<text x="22" y="13.6" font-family="Liberation Sans" font-weight="bold" font-size="13" fill="#D8303A" stroke="#D8303A" stroke-width="0.5" textLength="10" lengthAdjust="spacingAndGlyphs">M</text>
<text x="34" y="8.5" font-family="Liberation Sans" font-weight="bold" font-size="6" fill="#2A2F55" textLength="28.5" lengthAdjust="spacingAndGlyphs">TRAVEL</text>
<text x="34" y="13.4" font-family="Liberation Sans" font-weight="bold" font-size="4.6" fill="#2A2F55" textLength="28.5" lengthAdjust="spacingAndGlyphs">SOLUTIONS</text>
</svg>
<!-- /PAGEBLOCK -->


</body></html>
